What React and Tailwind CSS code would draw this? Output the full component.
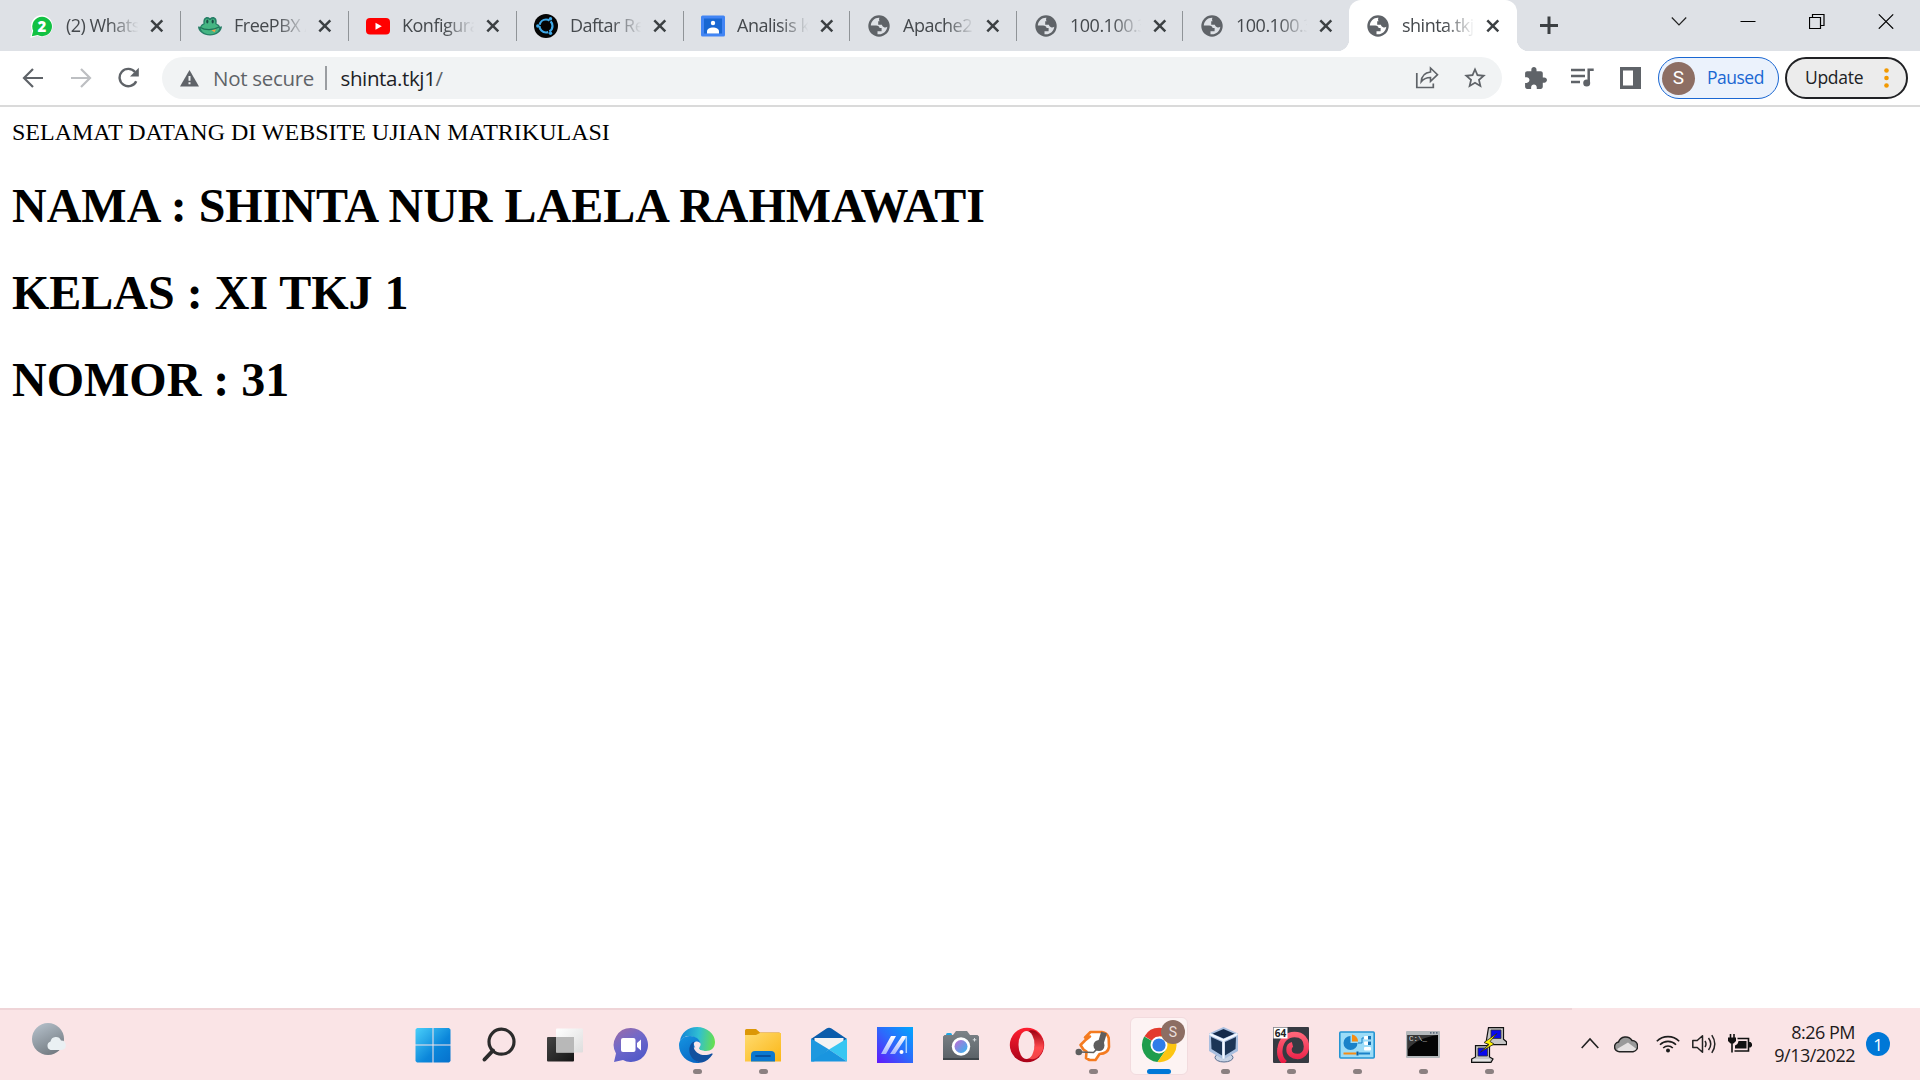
import React from "react";

function Svg({ w = 36, h = 36, box, className = "", children }) {
  return (
    <svg width={w} height={h} viewBox={box || `0 0 ${w} ${h}`} fill="none" className={`block shrink-0 ${className}`}>
      {children}
    </svg>
  );
}

/* ---------- tab favicons ---------- */

const WhatsappIcon = () => (
  <Svg w={24} h={24}>
    <path d="M12 1.300a10.700 10.700 0 1 1-4.600 20.400L.3 24l1.800-7.200A10.700 10.700 0 0 1 12 1.300z" fill="#fff" />
    <path d="M12 2.800a9.700 9.700 0 1 1-4.400 18.200L1.800 22.300l1.400-5.600A9.700 9.700 0 0 1 12 2.800z" fill="#12c143" />
    <text x="12" y="17.800" textAnchor="middle" fontFamily="Open Sans, sans-serif" fontWeight="800" fontSize="15" fill="#fff">2</text>
  </Svg>
);

const FrogIcon = () => (
  <Svg w={24} h={24}>
    <path d="M5.500 9.500C4.500 3 9.500 1.500 12 4.200c2.500-2.700 8-1.200 6.500 5.300 1.800.8 3 1.800 3.500 3.200l2-.5c0 5-5.500 9.300-12 9.300S0 17.200 0 12.500l2.200.2c.6-1.400 1.600-2.500 3.300-3.200z" fill="#267f66" />
    <path d="M6.800 10C6 4.500 9.500 3.500 11.300 6h1.400c1.900-2.500 5.300-1.500 4.500 4 3 1.300 4.500 3.500 3.800 5.500C19.500 18.800 16 20.200 12 20.200S4.500 18.800 3 15.500C2.300 13.500 3.800 11.300 6.800 10z" fill="#45b583" />
    <ellipse cx="9.300" cy="7.500" rx="1.100" ry="1.900" fill="#1b4f47" />
    <ellipse cx="14.700" cy="7.500" rx="1.100" ry="1.900" fill="#1b4f47" />
    <path d="M2.500 13.500c4 2.800 13 3 18.500-.5" stroke="#1f7258" strokeWidth="1.200" />
    <path d="M13.500 16.200l4.500-1-1.500 3z" fill="#f0a04b" />
  </Svg>
);

const YoutubeIcon = () => (
  <Svg w={24} h={24}>
    <rect y="4" width="24" height="16.500" rx="4" fill="#f00" />
    <path d="M9.500 8.700v7l6.300-3.500z" fill="#fff" />
  </Svg>
);

const CircleIcon = () => (
  <Svg w={24} h={24}>
    <circle cx="12" cy="12" r="12" fill="#050505" />
    <circle cx="12" cy="12" r="6.500" stroke="#3fa9e8" strokeWidth="2.200" strokeDasharray="12.400 1.200" strokeDashoffset="6" />
    <circle cx="16.500" cy="4.800" r="1.700" fill="#3fa9e8" />
    <circle cx="3.800" cy="12" r="1.700" fill="#3fa9e8" />
    <circle cx="16.500" cy="19.200" r="1.700" fill="#3fa9e8" />
  </Svg>
);

const ClassroomIcon = () => (
  <Svg w={24} h={24}>
    <rect y="1.500" width="24" height="21" rx="1.500" fill="#4285f4" />
    <rect x="3" y="4.500" width="18" height="15" fill="#1967d2" />
    <circle cx="12" cy="9" r="2.200" fill="#fff" />
    <path d="M6 19.500v-2.200c0-2.600 3-3.900 6-3.900s6 1.300 6 3.900v2.200z" fill="#fff" />
  </Svg>
);

const GlobeIcon = ({ active }) => (
  <Svg w={24} h={24}>
    <circle cx="12" cy="12" r="10.700" fill="#5f6368" />
    <path
      d="M12.500 3.800C8 3.500 4 7 3.800 11.500h5.400c1.900 0 3.300 1 3.400 2.600h2v3.100h-4.100v3c4.900.800 9.300-2.500 9.800-7.400-1 .700-2.100.900-3.200.500-1.200-.4-2-1.300-2.200-2.500H11.200V7.300h1.500c-.8-1-.9-2.300-.2-3.500z"
      fill={active ? "#fff" : "#dee1e6"}
    />
  </Svg>
);

const CloseX = () => (
  <Svg w={14} h={14}>
    <path d="M1.300 1.300l11 11M12.300 1.300l-11 11" stroke="#3c4043" strokeWidth="2.500" />
  </Svg>
);

const tabs = [
  { title: "(2) Whats", icon: WhatsappIcon, w: "w-[168px]", label: "w-[74px]" },
  { title: "FreePBX A", icon: FrogIcon, w: "w-[168px]", label: "w-[74px]" },
  { title: "Konfigura", icon: YoutubeIcon, w: "w-[168px]", label: "w-[74px]" },
  { title: "Daftar Re", icon: CircleIcon, w: "w-[167px]", label: "w-[73px]" },
  { title: "Analisis k", icon: ClassroomIcon, w: "w-[166px]", label: "w-[73px]" },
  { title: "Apache2", icon: GlobeIcon, w: "w-[167px]", label: "w-[73px]" },
  { title: "100.100.3", icon: GlobeIcon, w: "w-[166px]", label: "w-[73px]" },
  { title: "100.100.3", icon: GlobeIcon, w: "w-[166px]", label: "w-[73px]", last: true },
  { title: "shinta.tkj", icon: GlobeIcon, w: "w-[168px]", label: "w-[74px]", active: true },
];

function Tab({ title, icon: Icon, w, label, active, last }) {
  return (
    <div className={`relative flex h-[51px] shrink-0 items-center pl-[17px] ${w} ${active ? "rounded-t-[12px] bg-white" : ""}`}>
      {active && (
        <>
          <span className="absolute bottom-0 -left-3 size-3 bg-[radial-gradient(circle_at_0_0,transparent_12px,white_12.5px)]" />
          <span className="absolute bottom-0 -right-3 size-3 bg-[radial-gradient(circle_at_100%_0,transparent_12px,white_12.5px)]" />
        </>
      )}
      <Icon active={active} />
      <span
        className={`mb-px ml-3 overflow-hidden whitespace-nowrap text-[18px] leading-6 tracking-[-0.5px] text-[#45494d] [mask-image:linear-gradient(to_right,black_58%,transparent_98%)] ${label}`}
      >
        {title}
      </span>
      <span className="ml-[10px]">
        <CloseX />
      </span>
      {!active && !last && <span className="ml-auto h-[30px] w-[1.5px] bg-[#909498]" />}
    </div>
  );
}

function TabStrip() {
  return (
    <header className="flex h-[51px] bg-[#dee1e6] pl-[13px]">
      {tabs.map((t, i) => (
        <Tab key={i} {...t} />
      ))}
      <Svg w={18} h={18} className="ml-[23px] mt-4">
        <path d="M9 .5v18M0 9.500h18" stroke="#3c4043" strokeWidth="3" />
      </Svg>
      <div className="ml-auto mr-[26px] mt-[13px] flex h-4 gap-[53px]">
        <Svg w={16} h={16}>
          <path d="M.8 4.500L8 12l7.200-7.500" stroke="#222" strokeWidth="1.200" />
        </Svg>
        <Svg w={16} h={16}>
          <path d="M.5 8.500h15" stroke="#000" />
        </Svg>
        <Svg w={16} h={16}>
          <path d="M.5 4.500h11v11H.5zM3.500 4.500v-3h11.500v11h-3.500" stroke="#000" strokeWidth="1.200" />
        </Svg>
        <Svg w={16} h={16}>
          <path d="M.8 1.300l14.400 14.400M15.200 1.300L.8 15.700" stroke="#000" strokeWidth="1.200" />
        </Svg>
      </div>
    </header>
  );
}

function Toolbar() {
  return (
    <div className="flex h-[56px] items-center border-b-2 border-[#dadada] bg-white pl-[22px]">
      <Svg w={22} h={22}>
        <path d="M21 11H2.500M11 2l-9 9 9 9" stroke="#5f6368" strokeWidth="2.200" />
      </Svg>
      <Svg w={22} h={22} className="ml-[26px]">
        <path d="M1 11h18.500M11 2l9 9-9 9" stroke="#bdbfc2" strokeWidth="2.200" />
      </Svg>
      <Svg w={22} h={22} className="ml-[26px]">
        <path d="M18.200 14.200A8.700 8.700 0 1 1 17 5" stroke="#5f6368" strokeWidth="2.400" />
        <path d="M20.800.8v8.800H12z" fill="#5f6368" />
      </Svg>
      <div className="ml-[22px] flex h-[42px] w-[1340px] shrink-0 items-center rounded-full bg-[#f1f3f4] pl-[18px] pr-[26px]">
        <Svg w={19} h={19}>
          <path d="M9.500 1L19 17.500H0z" fill="#5f6368" />
          <path d="M9.500 7v4.800M9.500 13.300v2" stroke="#f1f3f4" strokeWidth="2" />
        </Svg>
        <span className="ml-[14px] w-[101px] whitespace-nowrap text-[20.500px] leading-7 tracking-[-0.3px] text-[#5f6368]">Not secure</span>
        <span className="ml-[11px] h-6 w-[1.5px] bg-[#9a9da1]" />
        <span className="ml-[14px] whitespace-nowrap text-[20.500px] leading-7 tracking-[-0.38px] text-[#202124]">
          shinta.tkj1<span className="text-[#5f6368]">/</span>
        </span>
        <Svg w={24} h={24} className="ml-auto">
          <path d="M1.800 7v14.500h16.500v-4" stroke="#5f6368" strokeWidth="1.700" />
          <path d="M15.500 2l7 6.700-7 6.600v-3.800c-4 0-7 1.300-9.300 4.300C6.500 10.500 9.500 6.700 15.500 6z" stroke="#5f6368" strokeWidth="1.600" />
        </Svg>
        <Svg w={26} h={26} box="0 0 24 24" className="ml-[23px] mr-[-12px]">
          <path d="M22 9.240l-7.190-.620L12 2 9.190 8.630 2 9.240l5.460 4.730L5.820 21 12 17.270 18.180 21l-1.630-7.030L22 9.240zM12 15.400l-3.760 2.270 1-4.280-3.320-2.880 4.380-.380L12 6.100l1.710 4.040 4.380.380-3.320 2.880 1 4.280L12 15.400z" fill="#5f6368" />
        </Svg>
      </div>
      <Svg w={25} h={25} box="0 0 24 24" className="ml-[21px]">
        <path d="M20.500 11H19V7c0-1.100-.9-2-2-2h-4V3.500C13 2.120 11.880 1 10.500 1S8 2.120 8 3.500V5H4c-1.100 0-1.990.9-1.990 2v3.800H3.500c1.490 0 2.700 1.210 2.700 2.700s-1.210 2.700-2.700 2.700H2V20c0 1.100.9 2 2 2h3.800v-1.500c0-1.490 1.210-2.700 2.700-2.700 1.490 0 2.700 1.210 2.700 2.700V22H17c1.100 0 2-.9 2-2v-4h1.500c1.380 0 2.500-1.120 2.500-2.500S21.880 11 20.500 11z" fill="#5f6368" />
      </Svg>
      <Svg w={25} h={22} className="ml-[22px]">
        <path d="M1 3h14M1 9h14M1 15h9" stroke="#5f6368" strokeWidth="2.300" />
        <path d="M18.700 16V2.800h5" stroke="#5f6368" strokeWidth="2.500" />
        <circle cx="16.700" cy="16" r="3.500" fill="#5f6368" />
      </Svg>
      <Svg w={21} h={22} className="ml-[25px]">
        <path fillRule="evenodd" d="M0 0h21v22H0zM3 3.500v15h10v-15z" fill="#5f6368" />
      </Svg>
      <div className="ml-[17px] flex h-[42px] w-[121px] shrink-0 items-center rounded-full border-[1.5px] border-[#1a67d2] bg-[#ebf2fc] pl-[3px]">
        <span className="flex size-[33px] items-center justify-center rounded-full bg-[#8d6e63] font-['Roboto'] text-[19px] text-white">S</span>
        <span className="mb-px ml-3 whitespace-nowrap text-[17.500px] tracking-[-0.5px] text-[#1a67d2]">Paused</span>
      </div>
      <div className="ml-[6px] flex h-[42px] w-[123px] shrink-0 items-center rounded-full border-2 border-[#202124] bg-[#ececec] pl-[18px]">
        <span className="mb-px whitespace-nowrap text-[17.500px] tracking-[-0.3px] text-[#202124]">Update</span>
        <Svg w={5} h={20} className="ml-auto mr-[17px]">
          <circle cx="2.500" cy="2.500" r="2.300" fill="#f29900" />
          <circle cx="2.500" cy="10" r="2.300" fill="#f29900" />
          <circle cx="2.500" cy="17.500" r="2.300" fill="#f29900" />
        </Svg>
      </div>
    </div>
  );
}

/* ---------- taskbar icons ---------- */

const WindowsIcon = () => (
  <Svg>
    <defs>
      <linearGradient id="win" x1="0" y1="0" x2="36" y2="36" gradientUnits="userSpaceOnUse">
        <stop stopColor="#4cd2fb" />
        <stop offset=".6" stopColor="#0b86da" />
        <stop offset="1" stopColor="#0670cc" />
      </linearGradient>
    </defs>
    <path d="M2 1h15.500v16.500H.5v-15zM18.500 1H34l1.500 1.500v15h-17zM.5 18.500h17v17H2L.5 34zM18.500 18.500h17V34L34 35.500H18.500z" fill="url(#win)" />
  </Svg>
);

const SearchIcon = () => (
  <Svg>
    <circle cx="20.500" cy="14.700" r="12.500" stroke="#2b2b2b" strokeWidth="3.200" />
    <path d="M12 23.500L3.500 32.500" stroke="#2b2b2b" strokeWidth="4" strokeLinecap="round" />
  </Svg>
);

const TaskViewIcon = () => (
  <Svg>
    <defs>
      <linearGradient id="tvd" x1="0" y1="0" x2="1" y2="1">
        <stop stopColor="#444" />
        <stop offset="1" stopColor="#151515" />
      </linearGradient>
      <linearGradient id="tvl" x1="0" y1="0" x2="1" y2="1">
        <stop stopColor="#fff" />
        <stop offset="1" stopColor="#ddd" />
      </linearGradient>
    </defs>
    <rect y="10" width="27" height="24.500" rx="1" fill="url(#tvd)" />
    <rect x="9" y="1.500" width="27" height="24" rx="1" fill="url(#tvl)" />
    <path d="M9 10h18v15.500H9z" fill="#b8b8b8" />
  </Svg>
);

const ChatIcon = () => (
  <Svg>
    <defs>
      <linearGradient id="chat" x1=".1" y1="0" x2=".7" y2="1">
        <stop stopColor="#9a6ba8" />
        <stop offset=".45" stopColor="#7169c9" />
        <stop offset="1" stopColor="#5058c8" />
      </linearGradient>
    </defs>
    <path d="M18 1a17 17 0 1 1-8 32L1 35l2-8.500A17 17 0 0 1 18 1z" fill="url(#chat)" />
    <rect x="8" y="11" width="14.500" height="14" rx="2" fill="#fff" />
    <path d="M24 16l4-3.500v11L24 20z" fill="#fff" />
  </Svg>
);

const EdgeIcon = () => (
  <Svg>
    <defs>
      <linearGradient id="edgeTop" x1="2" y1="12" x2="36" y2="16" gradientUnits="userSpaceOnUse">
        <stop stopColor="#1688d6" />
        <stop offset=".5" stopColor="#30bfd2" />
        <stop offset="1" stopColor="#69e14a" />
      </linearGradient>
      <linearGradient id="edgeMid" x1="0" y1="10" x2="16" y2="36" gradientUnits="userSpaceOnUse">
        <stop stopColor="#1593e0" />
        <stop offset="1" stopColor="#0867c4" />
      </linearGradient>
    </defs>
    <path d="M1 14C2 6 9 0 18 0c10 0 18 7 18 15 0 6-4 9-9 9-4 0-7-1-7-2.500 0-1 1.500-2 1.500-4.500C21.500 13 15 9 10 9c-4 0-7 2-9 5z" fill="url(#edgeTop)" />
    <path d="M0 18C0 13 4 9 11 9c6 0 10.500 4 10.500 8 0 2-1 3-1.500 4.500-7-4-9 3-6 8 2 4 6 6 9 6-2 .6-3 .5-5 .5C8 36 0 28 0 18z" fill="url(#edgeMid)" />
    <path d="M14 15c-7 5-4 20 9 20.500 4-1 8-4 10.500-8 .5-1-.3-1.300-1-1-8 4-18 0-18-8 0-1.500.5-3 1.500-4z" fill="#11509f" />
    <path d="M14.800 16.500c1-3 6-2.500 6.800.5 0 2.500-1.600 3.400-1.600 4.500 0 1.600 3 2.500 7 2.500-4 1.500-12-1-12.200-7.500z" fill="#fae8eb" />
  </Svg>
);

const FolderIcon = () => (
  <Svg>
    <defs>
      <linearGradient id="fold" x1="0" y1="0" x2="1" y2="1">
        <stop stopColor="#ffdb70" />
        <stop offset="1" stopColor="#fbb615" />
      </linearGradient>
    </defs>
    <path d="M0 3.500A1.500 1.500 0 0 1 1.500 2H11l4 3.500h19A2 2 0 0 1 36 7v8H0z" fill="#dc9706" />
    <path d="M0 8h11l4-2h21v28.500H0z" fill="url(#fold)" />
    <path d="M6 34.500V28a4 4 0 0 1 4-4h16a4 4 0 0 1 4 4v6.500z" fill="#0b78cf" />
    <path d="M11 29h14" stroke="#07509d" strokeWidth="1.800" strokeLinecap="round" />
  </Svg>
);

const MailIcon = () => (
  <Svg>
    <path d="M0 12L15.500 1.500q2.500-1.500 5 0L36 12v3H0z" fill="#0a5cab" />
    <path d="M3.500 11h29v9L18 27 3.500 20z" fill="#f3f3f3" />
    <path d="M0 11.500l18 11-15 12H0z" fill="#1d98df" />
    <path d="M36 11.500l-18 11 18 12z" fill="#37c6f2" />
    <path d="M0 34.500l3-2 15-10 18 12z" fill="#1995df" />
  </Svg>
);

const AsusIcon = () => (
  <Svg>
    <defs>
      <linearGradient id="asus" x1="0" y1="1" x2="1" y2="0">
        <stop stopColor="#6218fb" />
        <stop offset=".5" stopColor="#2d69fb" />
        <stop offset="1" stopColor="#00a7fe" />
      </linearGradient>
      <linearGradient id="asusw" x1="0" y1="0" x2="0" y2="1">
        <stop stopColor="#fff" />
        <stop offset="1" stopColor="#a4b5ff" />
      </linearGradient>
    </defs>
    <path d="M0 0h36v36H0z" fill="url(#asus)" />
    <path d="M14 9h5L9 27H4zM25 9h5L18 27h-5z" fill="url(#asusw)" />
    <path d="M29.300 9v17" stroke="#a9d1ff" strokeWidth="1.500" />
    <circle cx="24.500" cy="25" r="2" fill="#fff" />
  </Svg>
);

const CameraIcon = () => (
  <Svg>
    <defs>
      <linearGradient id="lens" x1="0" y1="0" x2="1" y2="1">
        <stop stopColor="#c26bd4" />
        <stop offset="1" stopColor="#2fb8f0" />
      </linearGradient>
      <linearGradient id="cam" x1="0" y1="0" x2="0" y2="1">
        <stop stopColor="#7d8388" />
        <stop offset="1" stopColor="#596066" />
      </linearGradient>
    </defs>
    <rect x="3" y="6" width="6" height="4" rx="1.500" fill="#1ba7e4" />
    <path d="M1.500 8H10l3-4h11l3 4h7.500L36 9.500V33H0V9.500z" fill="url(#cam)" />
    <path d="M0 31h36v2H0z" fill="#3e454a" />
    <circle cx="18" cy="19.500" r="9.200" fill="#fff" />
    <circle cx="18" cy="19.500" r="6.500" fill="url(#lens)" />
    <path d="M31.500 11v3.500M29.800 12.800h3.500" stroke="#d8dcdf" />
  </Svg>
);

const OperaIcon = () => (
  <Svg>
    <defs>
      <linearGradient id="opl" x1="0" y1="0" x2="0" y2="1">
        <stop stopColor="#ff1f30" />
        <stop offset="1" stopColor="#a90219" />
      </linearGradient>
      <linearGradient id="opr" x1="0" y1="0" x2="0" y2="1">
        <stop stopColor="#9c0012" />
        <stop offset=".6" stopColor="#ff4a4d" />
        <stop offset="1" stopColor="#f04548" />
      </linearGradient>
    </defs>
    <ellipse cx="18" cy="18" rx="17.200" ry="17.200" fill="url(#opl)" />
    <path d="M18 5c4-3 8-1.500 10 .3 9 7 9 18.500 0 25.500-3 2-7 2-10-.5 10-3 10-22 0-25.300z" fill="url(#opr)" />
    <ellipse cx="17.500" cy="18" rx="8" ry="14" fill="#fae4e6" />
  </Svg>
);

const ZoiperIcon = () => (
  <Svg>
    <path
      d="M10 13.500l-4.500 4.500 3 4.500 3 2-.5 6.500 3.500 2h6l4-6q8.500-.5 9.500-7l-.3-9Q32 5.500 27 5H15.500L10 10.500l5-1z"
      fill="#fff"
      stroke="#f47b20"
      strokeWidth="2.600"
      strokeLinejoin="round"
    />
    <path d="M29 5.500L25.500 17" stroke="#5e5e5e" strokeWidth="6" />
    <circle cx="24" cy="18.500" r="5.500" fill="#5e5e5e" />
    <path d="M22 22l-3.500 3.500L5 25" stroke="#5e5e5e" strokeWidth="1.600" />
    <circle cx="3.800" cy="25" r="3.300" fill="#5e5e5e" />
  </Svg>
);

const ChromeIcon = () => (
  <Svg>
    <path d="M18 18L3.500 9.200A17 17 0 0 1 33 9.500H18z" fill="#e33b2e" />
    <path d="M18 18L3.200 9.500A17 17 0 0 0 16.500 35L25.500 22z" fill="#1f9d4d" />
    <path d="M18 18l7.500 4-9 13A17 17 0 0 0 33 9.500H18z" fill="#fdc512" />
    <circle cx="18" cy="18" r="8.500" fill="#fff" />
    <circle cx="18" cy="18" r="6.600" fill="#2f7de9" />
  </Svg>
);

const VirtualBoxIcon = () => (
  <Svg>
    <ellipse cx="17" cy="30.500" rx="9" ry="4.500" fill="#c9d4e6" stroke="#5b6f90" />
    <path d="M16.500 0L31 6.500V24l-14.500 8.500L2 24V6.500z" fill="#a9bfdf" />
    <path d="M16.500 2l11 4.700-11 4.800-11-4.800z" fill="#142a4b" />
    <path d="M4 10l11 5v13.500L4.500 22zM29 10l-11 5v13.500L28.500 22z" fill="#1c3556" />
    <path d="M2.500 7l14 6.300L30.500 7M16.500 13.300v18.500" stroke="#f2f7ff" strokeWidth="2.200" />
  </Svg>
);

const DebianIcon = () => (
  <Svg>
    <defs>
      <linearGradient id="swirl" x1="0" y1="0" x2="0" y2="1">
        <stop stopColor="#ff6377" />
        <stop offset="1" stopColor="#e81a43" />
      </linearGradient>
    </defs>
    <rect width="36" height="36" rx="1" fill="#363a42" />
    <path
      d="M12 36c-4.500-4-6-8-5-14C8 13 14 7.500 21.500 7.500c8 0 12 5.500 12 12 0 6-4 10-9 10-5 0-8.500-3-8.500-7 0-2.500 1.500-4.500 3.500-5"
      stroke="url(#swirl)"
      strokeWidth="5.400"
    />
    <rect x=".5" y=".5" width="14" height="11" fill="#fff" />
    <text x="7.500" y="9.800" textAnchor="middle" fontSize="10" fontWeight="700" fontFamily="Open Sans, sans-serif" fill="#222">64</text>
  </Svg>
);

const ControlPanelIcon = () => (
  <Svg>
    <rect x=".8" y="5" width="34.400" height="26" rx="1" fill="#9bdcf8" stroke="#2494d2" strokeWidth="1.600" />
    <path d="M11.500 9a7 7 0 1 0 7 7h-7z" fill="#1a82c9" />
    <path d="M13 7.500a7 7 0 0 1 6 7h-6z" fill="#f58c15" />
    <path d="M19 16h4v-5h3" stroke="#1a82c9" />
    <rect x="25" y="9" width="7" height="3.500" rx="1" fill="#fff" />
    <rect x="25" y="14.500" width="7" height="3.500" rx="1" fill="#fff" />
    <rect x="25" y="20" width="7" height="3.500" rx="1" fill="#fff" />
    <path d="M29 9h3v3.500h-3zM29 14.500h3V18h-3z" fill="#1573b5" />
    <path d="M4.500 26.500h13" stroke="#f58c15" strokeWidth="2" />
    <path d="M19.500 26.500H31" stroke="#1a82c9" strokeWidth="2" />
    <path d="M17.500 24.500h2v4h-2z" fill="#0c5e9c" />
  </Svg>
);

const TerminalIcon = () => (
  <Svg>
    <rect x="1" y="4" width="34" height="27" rx="1" fill="#b4b8bb" />
    <path d="M2.500 8h30.500v21H2.500z" fill="#050505" />
    <path d="M2.500 8h30.500C20 10 9 14 2.500 23z" fill="#383838" />
    <path d="M25 5.800h1.500M28 5.800h1.500M31 5.800h1.500" stroke="#3b4c66" strokeWidth="1.300" />
    <text x="4" y="14" fontSize="7.500" fontFamily="Liberation Mono, monospace" fill="#ddd">C:\_</text>
  </Svg>
);

const PuttyIcon = () => (
  <Svg>
    <path d="M17.500.7h15v11.500l3 2.500v3h-18l-2.500-2z" fill="#c6c6c6" stroke="#111" strokeWidth="1.200" />
    <path d="M20 3h10v8.500H20z" fill="#0809ee" stroke="#333" strokeWidth=".8" />
    <path d="M4.500 18.700h14V30l3.500 2-2 3.300H.6V32l3.900-2z" fill="#c6c6c6" stroke="#111" strokeWidth="1.200" />
    <path d="M7 21h9.500v8H7z" fill="#0809ee" stroke="#333" strokeWidth=".8" />
    <path d="M2 33h17" stroke="#fff" />
    <path d="M26 6.500L13 15.500l5 2-8.500 7.500 13.500-8-4-2.500z" fill="#fff200" stroke="#222" strokeWidth=".8" />
  </Svg>
);

const apps = [
  { icon: WindowsIcon },
  { icon: SearchIcon },
  { icon: TaskViewIcon },
  { icon: ChatIcon },
  { icon: EdgeIcon, running: true },
  { icon: FolderIcon, running: true },
  { icon: MailIcon },
  { icon: AsusIcon },
  { icon: CameraIcon },
  { icon: OperaIcon },
  { icon: ZoiperIcon, running: true },
  { icon: ChromeIcon, active: true },
  { icon: VirtualBoxIcon, running: true },
  { icon: DebianIcon, running: true },
  { icon: ControlPanelIcon, running: true },
  { icon: TerminalIcon, running: true },
  { icon: PuttyIcon, running: true },
];

function AppButton({ icon: Icon, running, active }) {
  return (
    <div className="flex w-[66px] shrink-0 justify-center pt-[7px]">
      <div
        className={`relative flex h-[58px] w-[58px] flex-col items-center rounded-md border pt-[9px] ${
          active ? "border-[#f2dbde] bg-[#fdf3f3]" : "border-transparent"
        }`}
      >
        <Icon />
        {active && (
          <span className="absolute right-[2px] top-[2px] flex size-6 items-center justify-center rounded-full bg-[#8d6e63] font-['Roboto'] text-[14px] text-[#eadfdb]">
            S
          </span>
        )}
        {running && <span className="mt-[6px] h-[5px] w-[9px] rounded-full bg-[#8b8081]" />}
        {active && <span className="mt-[6px] h-[5px] w-6 shrink-0 rounded-full bg-[#0078d7]" />}
      </div>
    </div>
  );
}

function Taskbar() {
  return (
    <footer className="flex h-[72px] flex-col bg-[#fae4e6]">
      <div className="h-[2px] w-[1572px] shrink-0 bg-[#efd4d7]" />
      <div className="flex flex-1">
        <div className="w-[400px] shrink-0 pl-8 pt-[13px]">
          <Svg w={34} h={32}>
            <defs>
              <linearGradient id="moon" x1=".2" y1="0" x2=".7" y2="1">
                <stop stopColor="#b4bfc9" />
                <stop offset="1" stopColor="#717980" />
              </linearGradient>
            </defs>
            <circle cx="16" cy="16" r="16" fill="url(#moon)" />
            <path d="M18.500 27a4.500 4.500 0 0 1 0-8.500 5.500 5.500 0 0 1 10.500-1 4.800 4.800 0 0 1 1 9.500z" fill="#eaf0f3" />
          </Svg>
        </div>
        {apps.map((a, i) => (
          <AppButton key={i} {...a} />
        ))}
        <div className="ml-auto flex h-[68px] shrink-0 items-center pr-[30px]">
          <Svg w={18} h={18}>
            <path d="M.7 13L9 4l8.300 9" stroke="#222" strokeWidth="1.600" />
          </Svg>
          <Svg w={24} h={18} className="ml-[15px]">
            <path d="M5.500 16.800a4.900 4.900 0 0 1-1-9.700A7.500 7.500 0 0 1 18 5.500a5.700 5.700 0 0 1 1 11.300z" fill="#999" />
            <path d="M3 14l11-6.500 8.500 6.500-2 2.500H5z" fill="#e4e0e0" />
            <path d="M5.500 16.800a4.900 4.900 0 0 1-1-9.700A7.500 7.500 0 0 1 18 5.500a5.700 5.700 0 0 1 1 11.300z" stroke="#222" strokeWidth="1.500" />
          </Svg>
          <Svg w={24} h={18} className="ml-[18px]">
            <path d="M.8 6.300a15.800 15.800 0 0 1 22.400 0M4 9.700a11.300 11.300 0 0 1 16 0M7.200 13a6.800 6.800 0 0 1 9.600 0" stroke="#1c1c1c" strokeWidth="1.600" />
            <circle cx="12" cy="15.600" r="2" fill="#1c1c1c" />
          </Svg>
          <Svg w={24} h={20} className="ml-3">
            <path d="M.8 6.500h4.400L10.500 1.800v16.400l-5.300-4.700H.8z" stroke="#222" strokeWidth="1.500" strokeLinejoin="round" />
            <path d="M13 7q2 3 0 6M16.500 4q4.500 6 0 12M19.800 1.200q6 8.800 0 17.600" stroke="#222" strokeWidth="1.500" />
          </Svg>
          <Svg w={24} h={20} className="ml-3">
            <path d="M2.500 0v4M6 0v4" stroke="#111" strokeWidth="1.600" />
            <path d="M0 3.500h8V7L5.500 9.500h-3L0 7z" fill="#111" />
            <path d="M4 9v9.500M9.500 4.500h11v12.500h-14" stroke="#111" strokeWidth="1.600" />
            <path d="M10.500 7h8v7.500H7v-3q3-1 3.500-4.500z" fill="#111" />
            <path d="M21 8h1.500L24 9.500V12l-1.500 1.500H21z" fill="#111" />
          </Svg>
          <div className="w-[103px] text-right text-[18px] leading-[23px] tracking-[-0.5px] text-[#1e1a1b]">
            <div>8:26 PM</div>
            <div>9/13/2022</div>
          </div>
          <span className="ml-[11px] flex size-6 items-center justify-center rounded-full bg-[#0078d7] text-[17px] leading-none text-white">1</span>
        </div>
      </div>
    </footer>
  );
}

export default function App() {
  return (
    <div className="flex h-[1080px] w-[1920px] flex-col overflow-hidden bg-white font-['Open_Sans','Noto_Sans',sans-serif]">
      <TabStrip />
      <Toolbar />
      <main className="flex-1 px-3 pt-[11px] font-['Liberation_Serif',serif] text-black">
        <p className="text-[24px] leading-7">SELAMAT DATANG DI WEBSITE UJIAN MATRIKULASI</p>
        <h1 className="mt-8 text-[48px] font-bold leading-[55px]">NAMA : SHINTA NUR LAELA RAHMAWATI</h1>
        <h1 className="mt-8 text-[48px] font-bold leading-[55px]">KELAS : XI TKJ 1</h1>
        <h1 className="mt-8 text-[48px] font-bold leading-[55px]">NOMOR : 31</h1>
      </main>
      <Taskbar />
    </div>
  );
}
